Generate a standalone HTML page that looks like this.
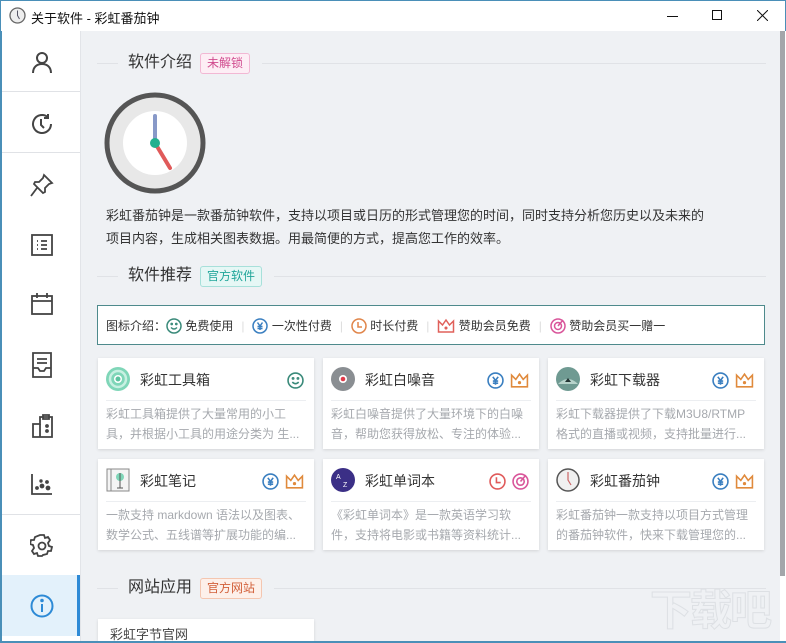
<!DOCTYPE html>
<html style="overflow:hidden;width:786px;height:643px"><head><meta charset="utf-8"><style>
*{margin:0;padding:0;box-sizing:border-box}
body{width:786px;height:643px;overflow:hidden;background:#fff;font-family:"Liberation Sans","Noto Sans CJK SC",sans-serif;position:relative;color:#333}
.a{position:absolute}
.tb{left:0;top:0;width:786px;height:31px;background:#fff;border-top:1px solid #4a8fb8;border-left:1px solid #4a8fb8;border-right:1px solid #4a8fb8}
.side{left:0;top:31px;width:81px;height:612px;background:#fff;border-left:2px solid #4a8fb8;border-right:1px solid #e2e4e8}
.main{left:81px;top:31px;width:699px;height:612px;background:#eff1f4}
.hl{height:1px;background:#e0e2e6}
.sec{font-size:16px;color:#333;line-height:20px}
.badge{font-size:12px;height:21px;line-height:19px;padding:0 6px;border-radius:3px;border:1px solid}
.card{background:#fff;width:216px;height:91px;box-shadow:0 1px 3px rgba(0,0,0,.12)}
.card .t{position:absolute;left:42px;top:12px;font-size:14px;color:#333}
.card .ln{position:absolute;left:8px;right:8px;top:42px;height:1px;background:#eceef1}
.card .d{position:absolute;left:8px;top:46px;width:202px;font-size:12px;line-height:20px;color:#a6a9ae;white-space:nowrap;overflow:hidden}
.card .ic{position:absolute;left:8px;top:9px;width:24px;height:24px}
.card .r{position:absolute;top:14px;right:10px;display:flex;gap:6px}
.sb svg{position:absolute;left:28px}
</style></head><body>
<div class="a tb">
<svg class="a" style="left:8px;top:6px" width="17" height="17" viewBox="0 0 17 17"><circle cx="8.5" cy="8.5" r="7.5" fill="#eee" stroke="#666" stroke-width="1.3"/><path d="M8.5 3.5V8.5L10.5 12" stroke="#556" stroke-width="1" fill="none"/></svg>
<div class="a" style="left:30px;top:7px;font-size:13px;color:#111">关于软件 - 彩虹番茄钟</div>
<div class="a" style="left:666px;top:15px;width:11px;height:1px;background:#111"></div>
<div class="a" style="left:711px;top:9px;width:10px;height:10px;border:1px solid #111"></div>
<svg class="a" style="left:756px;top:9px" width="11" height="11"><path d="M0 0L11 11M11 0L0 11" stroke="#111" stroke-width="1"/></svg>
</div>
<div class="a side sb">
<div class="a hl" style="left:0;top:60px;width:78px"></div>
<div class="a hl" style="left:0;top:121px;width:78px"></div>
<div class="a hl" style="left:0;top:483px;width:78px"></div>
<svg style="top:19px" width="24" height="24" viewBox="0 0 24 24" fill="none" stroke="#444" stroke-width="2"><circle cx="12" cy="8" r="5"/><path d="M3 23c0-6 4-9 9-9s9 3 9 9"/></svg>
<svg style="top:81px" width="24" height="24" viewBox="0 0 24 24" fill="none" stroke="#444" stroke-width="2"><path d="M21 12a9 9 0 1 1-3-6.7"/><path d="M18 2v4h-4"/><path d="M11 7v6l3 3"/></svg>
<svg style="top:142px" width="24" height="24" viewBox="0 0 24 24" fill="none" stroke="#444" stroke-width="1.8"><path d="M14 2l8 8-3 1-4 4 0 4-2 1-9-9 1-2 4 0 4-4z"/><path d="M7 15L1 23"/></svg>
<svg style="top:202px" width="24" height="24" viewBox="0 0 24 24" fill="none" stroke="#444" stroke-width="1.8"><rect x="2" y="2" width="20" height="20"/><path d="M7 8h1M7 12h1M7 16h1M11 8h6M11 12h6M11 16h6"/></svg>
<svg style="top:261px" width="24" height="24" viewBox="0 0 24 24" fill="none" stroke="#444" stroke-width="1.8"><rect x="2" y="4" width="20" height="18"/><path d="M2 9h20M7 1v5M17 1v5"/></svg>
<svg style="top:321px" width="24" height="26" viewBox="0 0 24 26" fill="none" stroke="#444" stroke-width="1.8"><path d="M3 1h18v24H3z"/><path d="M7 7h10M7 11h10M3 16h5l2 3h4l2-3h5"/></svg>
<svg style="top:382px" width="24" height="26" viewBox="0 0 24 26" fill="none" stroke="#444" stroke-width="1.8"><path d="M10 4h12v20H3V11h7z"/><path d="M10 11v13M13 2h6v4h-6z"/><circle cx="17" cy="13" r="1"/><circle cx="17" cy="18" r="1"/></svg>
<svg style="top:441px" width="24" height="24" viewBox="0 0 24 24" fill="none" stroke="#444" stroke-width="1.8"><path d="M2 2v20h20"/><circle cx="7" cy="16" r="1" fill="#444"/><circle cx="12" cy="14" r="1.5" fill="#444"/><circle cx="17" cy="10" r="1" fill="#444"/><circle cx="11" cy="9" r="0.8" fill="#444"/><circle cx="18" cy="16" r="1.5" fill="#444"/></svg>
<svg style="top:503px" width="24" height="24" viewBox="0 0 24 24" fill="none" stroke="#444" stroke-width="1.8"><circle cx="12" cy="12" r="3.5"/><path d="M10 1h4l1 3 3-1 2 3-2 3 1 3 3 1-1 4-3 0-1 3-4 1-1 1h-4l-1-3-3 1-2-3 2-3-1-3-3-1 1-4 3 0 1-3z"/></svg>
<div class="a" style="left:0;top:544px;width:78px;height:61px;background:#e3f1fb;border-right:3px solid #2d8ad6"></div>
<svg style="top:563px" width="24" height="24" viewBox="0 0 24 24" fill="none" stroke="#2d8ad6" stroke-width="2"><circle cx="12" cy="12" r="10.5"/><path d="M12 10v8"/><circle cx="12" cy="6.5" r="0.8" fill="#2d8ad6"/></svg>
</div>
<div class="a main"></div>
<div class="a" style="left:780px;top:31px;width:5px;height:545px;background:#a3a6aa"></div>

<!-- section 1 -->
<div class="a hl" style="left:97px;top:63px;width:669px"></div>
<div class="a" style="left:118px;top:52px;width:144px;height:24px;background:#eff1f4"></div>
<div class="a sec" style="left:128px;top:53px">软件介绍</div>
<div class="a badge" style="left:200px;top:53px;color:#d04b8e;border-color:#f2b8d4;background:#fdeef5">未解锁</div>
<svg class="a" style="left:104px;top:92px" width="102" height="102" viewBox="0 0 102 102"><circle cx="51" cy="51" r="48" fill="#e8e8e8" stroke="#555" stroke-width="5"/><circle cx="51" cy="51" r="32" fill="#fff"/><path d="M51 51V24" stroke="#8899c8" stroke-width="4" stroke-linecap="round"/><path d="M51 51L66 76" stroke="#e05a5a" stroke-width="4" stroke-linecap="round"/><circle cx="51" cy="51" r="5" fill="#23b08f"/></svg>
<div class="a" style="left:106px;top:204px;font-size:13px;line-height:23px;color:#333;width:660px">彩虹番茄钟是一款番茄钟软件，支持以项目或日历的形式管理您的时间，同时支持分析您历史以及未来的<br>项目内容，生成相关图表数据。用最简便的方式，提高您工作的效率。</div>

<!-- section 2 -->
<div class="a hl" style="left:97px;top:276px;width:669px"></div>
<div class="a" style="left:118px;top:265px;width:156px;height:24px;background:#eff1f4"></div>
<div class="a sec" style="left:128px;top:266px">软件推荐</div>
<div class="a badge" style="left:200px;top:266px;color:#21a69a;border-color:#a7e0da;background:#e6f7f5">官方软件</div>

<div class="a" style="left:97px;top:305px;width:668px;height:40px;background:#fff;border:1px solid #4e8a8c"></div>
<div class="a" style="left:106px;top:317px;font-size:12px;color:#333;display:flex;align-items:center;white-space:nowrap">图标介绍：
<svg width="16" height="16" viewBox="0 0 16 16" fill="none" stroke="#3a8a7a" stroke-width="1.5"><circle cx="8" cy="8" r="7"/><path d="M5 9.5q3 3 6 0"/><circle cx="5.7" cy="6" r=".6"/><circle cx="10.3" cy="6" r=".6"/></svg>&nbsp;免费使用<span style="color:#ddd;margin:0 8px">|</span>
<svg width="16" height="16" viewBox="0 0 16 16" fill="none" stroke="#3a7fc0" stroke-width="1.5"><circle cx="8" cy="8" r="7"/><path d="M5.5 4.5L8 8l2.5-3.5M8 8v4M5.5 8.5h5M5.5 10.5h5"/></svg>&nbsp;一次性付费<span style="color:#ddd;margin:0 8px">|</span>
<svg width="16" height="16" viewBox="0 0 16 16" fill="none" stroke="#e0854a" stroke-width="1.5"><circle cx="8" cy="8" r="7"/><path d="M7 4v5h4"/></svg>&nbsp;时长付费<span style="color:#ddd;margin:0 8px">|</span>
<svg width="18" height="16" viewBox="0 0 18 16" fill="none" stroke="#e0605a" stroke-width="1.5"><path d="M1.5 3l4 4 3.5-5 3.5 5 4-4v11h-15z"/><circle cx="9" cy="10" r=".8" fill="#e0605a"/></svg>&nbsp;赞助会员免费<span style="color:#ddd;margin:0 8px">|</span>
<svg width="16" height="16" viewBox="0 0 16 16" fill="none" stroke="#d9559a" stroke-width="1.5"><circle cx="8" cy="8" r="7"/><circle cx="8" cy="8" r="3.5"/><path d="M8 8L13 2"/></svg>&nbsp;赞助会员买一赠一</div>

<div class="a card" style="left:98px;top:358px">
<svg class="ic" viewBox="0 0 24 24"><circle cx="12" cy="12" r="12" fill="#7fd6b8"/><circle cx="12" cy="12" r="8" fill="none" stroke="#c8f0e2" stroke-width="2.5"/><circle cx="12" cy="12" r="4" fill="#fff"/><circle cx="12" cy="12" r="2.5" fill="#5cc39f"/></svg>
<div class="t">彩虹工具箱</div>
<div class="r"><svg width="17" height="17" viewBox="0 0 16 16" fill="none" stroke="#3a8a7a" stroke-width="1.5"><circle cx="8" cy="8" r="7"/><path d="M5 9.5q3 3 6 0"/><circle cx="5.7" cy="6" r=".6"/><circle cx="10.3" cy="6" r=".6"/></svg></div>
<div class="ln"></div><div class="d">彩虹工具箱提供了大量常用的小工<br>具，并根据小工具的用途分类为 生...</div></div>

<div class="a card" style="left:323px;top:358px">
<svg class="ic" viewBox="0 0 24 24"><circle cx="12" cy="12" r="12" fill="#8a8e92"/><circle cx="12" cy="12" r="4" fill="#fff"/><circle cx="12" cy="12" r="2.3" fill="#e03a4a"/></svg>
<div class="t">彩虹白噪音</div>
<div class="r"><svg width="17" height="17" viewBox="0 0 16 16" fill="none" stroke="#3a7fc0" stroke-width="1.5"><circle cx="8" cy="8" r="7"/><path d="M5.5 4.5L8 8l2.5-3.5M8 8v4M5.5 8.5h5M5.5 10.5h5"/></svg><svg width="19" height="17" viewBox="0 0 18 16" fill="none" stroke="#e08a3c" stroke-width="1.5"><path d="M1.5 3l4 4 3.5-5 3.5 5 4-4v11h-15z"/><circle cx="9" cy="10" r=".8" fill="#e08a3c"/></svg></div>
<div class="ln"></div><div class="d">彩虹白噪音提供了大量环境下的白噪<br>音，帮助您获得放松、专注的体验...</div></div>

<div class="a card" style="left:548px;top:358px">
<svg class="ic" viewBox="0 0 24 24"><circle cx="12" cy="12" r="12" fill="#6f9a92"/><path d="M2 17q10-10 20 0" fill="#b7d3cb"/><path d="M9 15l3-4 3 4z" fill="#233"/></svg>
<div class="t">彩虹下载器</div>
<div class="r"><svg width="17" height="17" viewBox="0 0 16 16" fill="none" stroke="#3a7fc0" stroke-width="1.5"><circle cx="8" cy="8" r="7"/><path d="M5.5 4.5L8 8l2.5-3.5M8 8v4M5.5 8.5h5M5.5 10.5h5"/></svg><svg width="19" height="17" viewBox="0 0 18 16" fill="none" stroke="#e08a3c" stroke-width="1.5"><path d="M1.5 3l4 4 3.5-5 3.5 5 4-4v11h-15z"/><circle cx="9" cy="10" r=".8" fill="#e08a3c"/></svg></div>
<div class="ln"></div><div class="d">彩虹下载器提供了下载M3U8/RTMP<br>格式的直播或视频，支持批量进行...</div></div>

<div class="a card" style="left:98px;top:459px">
<svg class="ic" viewBox="0 0 24 24"><rect x="1" y="1" width="22" height="22" fill="#f4f4f4" stroke="#888"/><path d="M5 1v22" stroke="#888"/><circle cx="14" cy="9" r="4" fill="#7fd6b8"/><path d="M14 5v15M11 20h6" stroke="#555"/></svg>
<div class="t">彩虹笔记</div>
<div class="r"><svg width="17" height="17" viewBox="0 0 16 16" fill="none" stroke="#3a7fc0" stroke-width="1.5"><circle cx="8" cy="8" r="7"/><path d="M5.5 4.5L8 8l2.5-3.5M8 8v4M5.5 8.5h5M5.5 10.5h5"/></svg><svg width="19" height="17" viewBox="0 0 18 16" fill="none" stroke="#e08a3c" stroke-width="1.5"><path d="M1.5 3l4 4 3.5-5 3.5 5 4-4v11h-15z"/><circle cx="9" cy="10" r=".8" fill="#e08a3c"/></svg></div>
<div class="ln"></div><div class="d">一款支持 markdown 语法以及图表、<br>数学公式、五线谱等扩展功能的编...</div></div>

<div class="a card" style="left:323px;top:459px">
<svg class="ic" viewBox="0 0 24 24"><circle cx="12" cy="12" r="12" fill="#3b2f86"/><text x="5" y="11" font-size="7" fill="#fff" font-family="Liberation Sans">A</text><text x="12" y="19" font-size="7" fill="#fff" font-family="Liberation Sans">Z</text></svg>
<div class="t">彩虹单词本</div>
<div class="r"><svg width="17" height="17" viewBox="0 0 16 16" fill="none" stroke="#e05a5a" stroke-width="1.5"><circle cx="8" cy="8" r="7"/><path d="M7 4v5h4"/></svg><svg width="17" height="17" viewBox="0 0 16 16" fill="none" stroke="#d9559a" stroke-width="1.5"><circle cx="8" cy="8" r="7"/><circle cx="8" cy="8" r="3.5"/><path d="M8 8L13 2"/></svg></div>
<div class="ln"></div><div class="d">《彩虹单词本》是一款英语学习软<br>件，支持将电影或书籍等资料统计...</div></div>

<div class="a card" style="left:548px;top:459px">
<svg class="ic" viewBox="0 0 24 24"><circle cx="12" cy="12" r="11" fill="#f0f0f0" stroke="#555" stroke-width="1.5"/><path d="M12 4v8l3 5" stroke="#c66" stroke-width="1.2" fill="none"/></svg>
<div class="t">彩虹番茄钟</div>
<div class="r"><svg width="17" height="17" viewBox="0 0 16 16" fill="none" stroke="#3a7fc0" stroke-width="1.5"><circle cx="8" cy="8" r="7"/><path d="M5.5 4.5L8 8l2.5-3.5M8 8v4M5.5 8.5h5M5.5 10.5h5"/></svg><svg width="19" height="17" viewBox="0 0 18 16" fill="none" stroke="#e08a3c" stroke-width="1.5"><path d="M1.5 3l4 4 3.5-5 3.5 5 4-4v11h-15z"/><circle cx="9" cy="10" r=".8" fill="#e08a3c"/></svg></div>
<div class="ln"></div><div class="d">彩虹番茄钟一款支持以项目方式管理<br>的番茄钟软件，快来下载管理您的...</div></div>

<!-- section 3 -->
<div class="a hl" style="left:97px;top:588px;width:669px"></div>
<div class="a" style="left:118px;top:577px;width:156px;height:24px;background:#eff1f4"></div>
<div class="a sec" style="left:128px;top:578px">网站应用</div>
<div class="a badge" style="left:200px;top:578px;color:#d2603a;border-color:#f4c6b0;background:#fdf0ea">官方网站</div>
<div class="a" style="left:98px;top:619px;width:216px;height:22px;background:#fff;box-shadow:0 1px 3px rgba(0,0,0,.12)"><div style="position:absolute;left:12px;top:5px;font-size:13px;color:#444">彩虹字节官网</div></div>
<div class="a" style="left:650px;top:588px;font-size:42px;line-height:46px;white-space:nowrap;font-weight:bold;color:transparent;-webkit-text-stroke:1px #dde0e4;letter-spacing:-2px">下载吧</div>
<div class="a" style="left:0;top:641px;width:786px;height:2px;background:#4a8fb8"></div>
</body></html>
